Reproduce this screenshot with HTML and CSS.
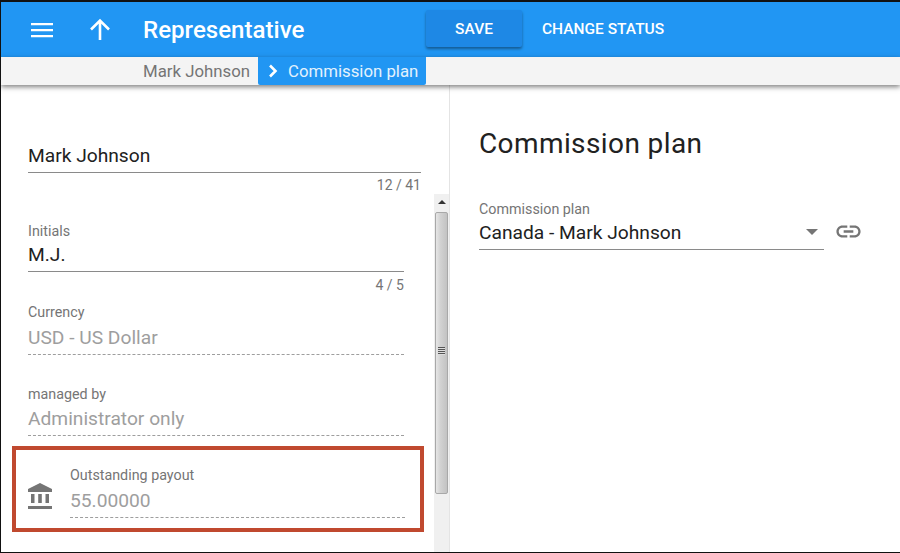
FILE: index.html
```html
<!DOCTYPE html>
<html>
<head>
    <title>Representative</title>
    <link rel="stylesheet" href="styles.css">
</head>
<body>

<div class="frame">
    <div class="toolbar">
        <svg class="menu-icon" width="24" height="24" viewBox="0 0 24 24"><path d="M1 5h22v2.200H1zM1 11h22v2.200H1zM1 17h22v2.200H1z" fill="#fff"/></svg>
        <svg class="up-icon" width="24" height="24" viewBox="0 0 24 24"><path d="M3 11.500l9-9 9 9M12 3v19" fill="none" stroke="#fff" stroke-width="2.600"/></svg>
        <div class="title">Representative</div>
        <button class="btn btn-save">SAVE</button>
        <button class="btn">CHANGE STATUS</button>
    </div>

    <div class="crumbs">
        <span class="crumb">Mark Johnson</span>
        <span class="crumb crumb-active">
            <svg width="10" height="14" viewBox="0 0 10 14"><path d="M2 1.500L7.500 7 2 12.500" fill="none" stroke="#fff" stroke-width="2.600"/></svg>
            Commission plan
        </span>
    </div>

    <div class="content">
        <div class="left-panel">
            <div class="field field-name">
                <div class="value underlined">Mark Johnson</div>
                <div class="counter">12 / 41</div>
            </div>
            <div class="field field-initials">
                <div class="label">Initials</div>
                <div class="value underlined">M.J.</div>
                <div class="counter">4 / 5</div>
            </div>
            <div class="field field-currency">
                <div class="label">Currency</div>
                <div class="value readonly">USD - US Dollar</div>
            </div>
            <div class="field field-managed">
                <div class="label">managed by</div>
                <div class="value readonly">Administrator only</div>
            </div>
            <div class="payout">
                <svg class="bank-icon" width="24" height="26" viewBox="0 0 24 26"><path d="M12 0L24 6v3H0V6zM3 11h3.500v9H3zM10.200 11h3.600v9h-3.600zM17.500 11H21v9h-3.500zM0 23h24v3H0z" fill="#757575"/></svg>
                <div class="field field-payout">
                    <div class="label">Outstanding payout</div>
                    <div class="value readonly">55.00000</div>
                </div>
            </div>
            <div class="scrollbar">
                <div class="scroll-arrow"></div>
                <div class="scroll-thumb"><div class="scroll-grip"></div></div>
            </div>
        </div>

        <div class="right-panel">
            <h2>Commission plan</h2>
            <div class="plan-row">
                <div class="plan-select">
                    <div class="label">Commission plan</div>
                    <div class="select-value">Canada - Mark Johnson<span class="caret"></span></div>
                </div>
                <svg class="link-icon" width="29" height="29" viewBox="0 0 24 24"><path d="M3.900 12c0-1.710 1.390-3.100 3.100-3.100h4V7H7c-2.760 0-5 2.240-5 5s2.240 5 5 5h4v-1.900H7c-1.710 0-3.100-1.390-3.100-3.100zM8 13h8v-2H8v2zm9-6h-4v1.900h4c1.710 0 3.100 1.390 3.100 3.100s-1.390 3.100-3.100 3.100h-4V17h4c2.760 0 5-2.240 5-5s-2.240-5-5-5z" fill="#757575"/></svg>
            </div>
        </div>
    </div>
</div>

</body>
</html>
```

FILE: styles.css
```css
* { box-sizing: border-box; }
html, body { margin: 0; padding: 0; }
body { width: 900px; height: 553px; overflow: hidden; background-color: #fff; font-family: Roboto, sans-serif; }

.frame { position: relative; width: 900px; height: 553px; border: 1px solid #111; border-top-width: 2px; border-right: 0; overflow: hidden; }

.toolbar { display: flex; align-items: center; height: 55px; background-color: #2196f3; color: #fff; }
.menu-icon { margin-left: 29px; }
.up-icon { margin-left: 34px; }
.title { width: 283px; margin-left: 31px; font-size: 24.1px; font-weight: 500; }
.btn { height: 37px; margin-bottom: 2px; padding: 0; border: none; background: none; color: #fff; font-family: Roboto, sans-serif; font-size: 15.5px; font-weight: 500; }
.btn-save { width: 96px; margin-right: 20px; background-color: #1e88e5; border-radius: 2px; box-shadow: 0 2px 3px rgba(0,0,0,0.4); }

.crumbs { position: relative; z-index: 2; display: flex; height: 28px; padding-left: 142px; background-color: #f4f4f4; box-shadow: 0 2px 5px rgba(0,0,0,0.5); font-size: 16.8px; }
.crumb { display: flex; align-items: center; color: #757575; padding-right: 8px; }
.crumb-active { gap: 10px; padding: 0 8px 0 10px; background-color: #2196f3; color: #e3f2fd; border-radius: 0 0 2px 2px; }

.content { display: flex; height: 467px; }
.left-panel { position: relative; width: 449px; padding: 0 0 0 27px; border-right: 1px solid #e4e4e4; }
.right-panel { flex: 1; padding: 41px 0 0 29px; }
h2 { margin: 0; font-size: 28px; font-weight: 400; line-height: 36px; color: #212121; letter-spacing: 0.4px; }

.field { width: 376px; }
.label { margin-bottom: 4px; font-size: 14.3px; line-height: 16px; color: #757575; }
.value { padding-top: 1px; font-size: 19.2px; line-height: 24px; color: #212121; }
.underlined { padding-bottom: 4px; border-bottom: 1px solid #8a8a8a; }
.readonly { padding-bottom: 4px; color: #9e9e9e; border-bottom: 1px dashed #9e9e9e; }
.counter { margin-top: 5px; font-size: 14px; line-height: 15px; text-align: right; color: #757575; }

.field-name { width: 393px; padding-top: 58px; }
.field-initials { padding-top: 30px; }
.field-initials .label { margin-bottom: 3px; }
.field-initials .counter { margin-top: 6px; }
.field-currency { padding-top: 11px; }
.field-currency .label { margin-bottom: 5px; }
.field-managed { padding-top: 31px; }

.payout { display: flex; align-items: flex-end; width: 412px; height: 86px; margin: 10px 0 0 -16px; padding: 0 15px 10px 12px; border: 4px solid #c0492f; }
.bank-icon { flex-shrink: 0; margin: 0 18px 9px 0; }
.field-payout { width: 335px; }
.field-payout .label { margin-bottom: 5px; }

.scrollbar { position: absolute; top: 109px; right: 0; bottom: 0; width: 15px; background-color: #f0f0f0; }
.scroll-arrow { position: relative; height: 18px; }
.scroll-arrow::after { content: ""; position: absolute; top: 6px; left: 4px; border: 4px solid transparent; border-top: 0; border-bottom-color: #333; }
.scroll-thumb { position: relative; height: 282px; margin: 0 1px; background: linear-gradient(to right, #e6e6e6, #d2d2d2 40%, #c2c2c2); border: 1px solid #a8a8a8; border-radius: 2px; }
.scroll-grip { position: absolute; top: 134px; left: 2px; width: 7px; height: 8px; background: repeating-linear-gradient(#555 0 1px, #ddd 1px 2px); }

.plan-row { display: flex; align-items: flex-end; margin-top: 39px; }
.plan-select { width: 345px; border-bottom: 1px solid #8a8a8a; }
.plan-select .label { margin-bottom: 3px; }
.select-value { position: relative; padding-bottom: 4px; font-size: 19.2px; line-height: 25px; color: #212121; }
.caret { position: absolute; top: 9px; right: 6px; border: 6px solid transparent; border-bottom: 0; border-top-color: #757575; }
.link-icon { margin: 0 0 4px 10px; }
```
